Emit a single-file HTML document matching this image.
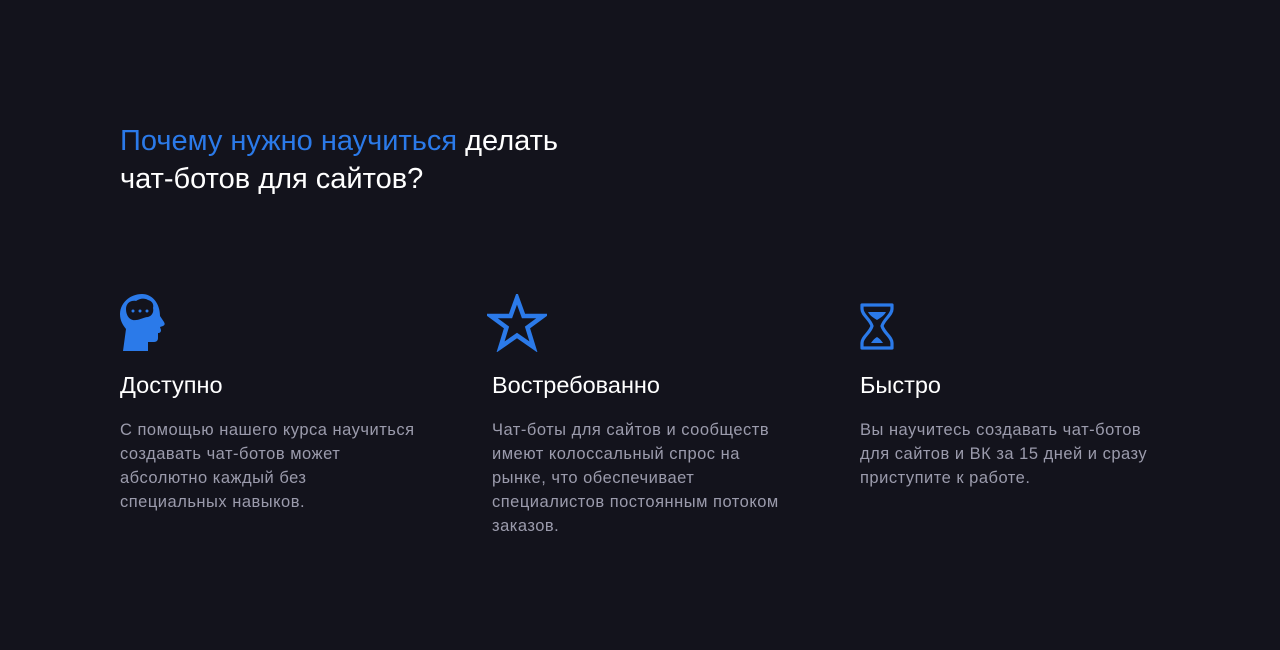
<!DOCTYPE html>
<html><head><meta charset="utf-8"><style>
body{margin:0;background:#13131c;width:1280px;height:650px;overflow:hidden;font-family:"Liberation Sans",sans-serif;}
h1{position:absolute;left:120px;top:122px;margin:0;font-size:29px;line-height:38px;font-weight:normal;color:#fff;white-space:nowrap}
h1 span{color:#2b7ae9}
.col{position:absolute;top:0}
.col svg{position:absolute}
.col h3{position:absolute;top:370px;margin:0;font-size:23.5px;line-height:30px;font-weight:normal;color:#fff;white-space:nowrap}
.col p{position:absolute;top:418px;margin:0;font-size:16.5px;letter-spacing:0.5px;line-height:24px;color:#9b9bac;white-space:nowrap}
</style></head><body>
<h1><span>Почему нужно научиться</span> делать<br>чат-ботов для сайтов?</h1>

<div class="col" style="left:120px">
<svg style="left:0;top:294px" width="46" height="58" viewBox="0 0 46 58">
<path d="M22 0C10 0 0 9 0 20c0 7 3 11 6 15L3 57h25V48h6c3 0 4-2 4-4v-5c2 0 3-1 3-3l-1-3 3-1c2-1 2-2 1-4l-4-6C40 9 32 0 22 0z" fill="#2b7ae9"/>
<path d="M6 15c0-6 5-9 10-8 4-3 9-3 12-1 4 1 6 4 5 8 1 4-1 8-5 9-4 0-8 3-12 3-6 1-10-4-10-11z" fill="#13131c"/>
<circle cx="13" cy="17" r="1.5" fill="#2b7ae9"/><circle cx="20" cy="17" r="1.5" fill="#2b7ae9"/><circle cx="27" cy="17" r="1.5" fill="#2b7ae9"/>
</svg>
<h3>Доступно</h3>
<p>С помощью нашего курса научиться<br>создавать чат-ботов может<br>абсолютно каждый без<br>специальных навыков.</p>
</div>

<div class="col" style="left:492px">
<svg style="left:-5px;top:294px" width="60" height="58" viewBox="0 0 60 58">
<polygon points="30,4 36.5,22 56,22 40.5,33.5 46.5,53 30,41.5 13.5,53 19.5,33.5 4,22 23.5,22" fill="none" stroke="#2b7ae9" stroke-width="4.5" stroke-linejoin="miter"/>
</svg>
<h3>Востребованно</h3>
<p>Чат-боты для сайтов и сообществ<br>имеют колоссальный спрос на<br>рынке, что обеспечивает<br>специалистов постоянным потоком<br>заказов.</p>
</div>

<div class="col" style="left:860px">
<svg style="left:0;top:303px" width="34" height="47" viewBox="0 0 34 47">
<path d="M2 2h30v4c0 6-8 10-10 17 2 7 10 11 10 17v5H2v-5c0-6 8-10 10-17C10 16 2 12 2 6z" fill="none" stroke="#2b7ae9" stroke-width="3.2" stroke-linejoin="round"/>
<path d="M8 9h18c-2 4-6 6-9 8-3-2-7-4-9-8z" fill="#2b7ae9"/>
<path d="M11 40c2-3 4-5 6-6 2 1 4 3 6 6z" fill="#2b7ae9"/>
</svg>
<h3>Быстро</h3>
<p>Вы научитесь создавать чат-ботов<br>для сайтов и ВК за 15 дней и сразу<br>приступите к работе.</p>
</div>
</body></html>
